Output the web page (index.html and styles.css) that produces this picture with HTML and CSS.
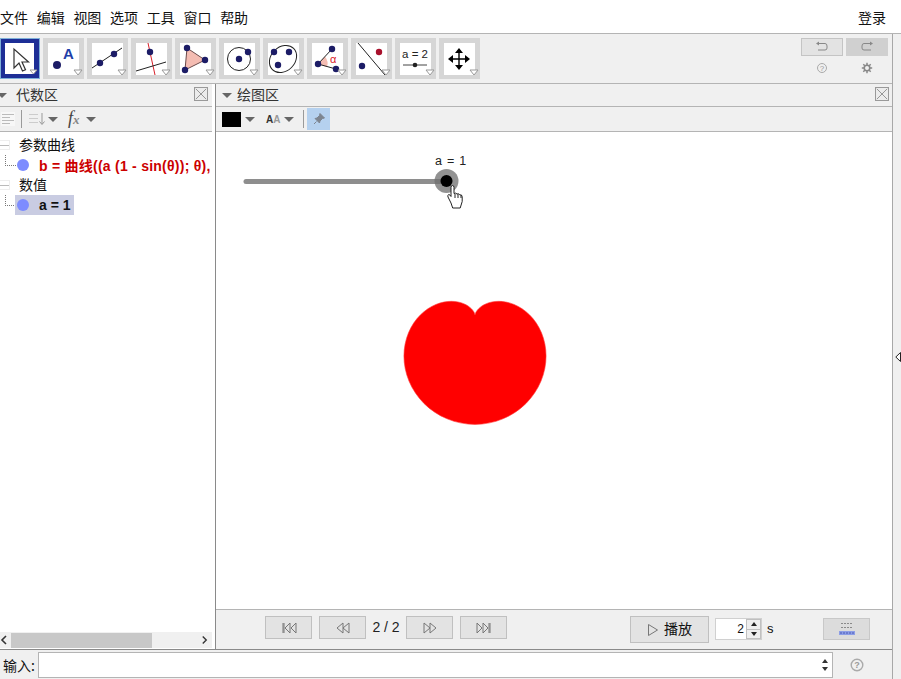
FILE: index.html
```html
<!DOCTYPE html>
<html lang="zh">
<head>
<meta charset="utf-8">
<title>GeoGebra</title>
<link rel="stylesheet" href="styles.css">
</head>
<body>
<div class="app">
  <header class="menubar">
    <nav class="menus"><span>文件</span><span>编辑</span><span>视图</span><span>选项</span><span>工具</span><span>窗口</span><span>帮助</span></nav>
    <span class="login">登录</span>
  </header>
  <div class="below">
    <div class="work">
      <section class="toolbar">
        <div class="tools">
          <div class="tool selected"><svg viewBox="0 0 40 41" width="40" height="41"><rect x="5" y="5" width="29" height="31" fill="#fff"/><path d="M14 11v19l5-5 3.500 8 3-1.300-3.500-7.700h6.500z" fill="#fff" stroke="#333" stroke-width="1.200"/><path d="M30 32h7l-3.500 4z" fill="#fff" stroke="#999"/></svg></div>
          <div class="tool"><svg viewBox="0 0 41 41" width="41" height="41"><rect x="5" y="5" width="31" height="32" fill="#fff"/><circle cx="14" cy="27" r="4" fill="#1c1c66"/><text x="20" y="21" class="pt-label">A</text><path class="drop" d="M31 32h8l-4 5z"/></svg></div>
          <div class="tool"><svg viewBox="0 0 41 41" width="41" height="41"><rect x="5" y="5" width="31" height="32" fill="#fff"/><path d="M5 30L35 10" stroke="#222" fill="none"/><circle cx="13" cy="25" r="3.200" fill="#1c1c66"/><circle cx="27" cy="16" r="3.200" fill="#1c1c66"/><path class="drop" d="M31 32h8l-4 5z"/></svg></div>
          <div class="tool"><svg viewBox="0 0 41 41" width="41" height="41"><rect x="5" y="5" width="31" height="32" fill="#fff"/><path d="M17 5L24 37" stroke="#d8202a" fill="none"/><path d="M5 33L35 24" stroke="#222" fill="none"/><circle cx="19" cy="14" r="3.200" fill="#1c1c66"/><path class="drop" d="M31 32h8l-4 5z"/></svg></div>
          <div class="tool"><svg viewBox="0 0 41 41" width="41" height="41"><rect x="5" y="5" width="31" height="32" fill="#fff"/><path d="M12 10L30 22 10 32z" fill="#f4bcb2" stroke="#6a4a4a"/><circle cx="12" cy="10" r="3.200" fill="#1c1c66"/><circle cx="30" cy="22" r="3.200" fill="#1c1c66"/><circle cx="10" cy="32" r="3.200" fill="#1c1c66"/><path class="drop" d="M31 32h8l-4 5z"/></svg></div>
          <div class="tool"><svg viewBox="0 0 41 41" width="41" height="41"><rect x="5" y="5" width="31" height="32" fill="#fff"/><circle cx="20" cy="21" r="11.500" fill="none" stroke="#222"/><circle cx="20" cy="21" r="3.200" fill="#1c1c66"/><circle cx="29" cy="14" r="3.200" fill="#1c1c66"/><path class="drop" d="M31 32h8l-4 5z"/></svg></div>
          <div class="tool"><svg viewBox="0 0 41 41" width="41" height="41"><rect x="5" y="5" width="31" height="32" fill="#fff"/><ellipse cx="20" cy="21" rx="15" ry="12" transform="rotate(-45 20 21)" fill="none" stroke="#222"/><circle cx="11" cy="14" r="3.200" fill="#1c1c66"/><circle cx="26" cy="14" r="3.200" fill="#1c1c66"/><circle cx="15" cy="27" r="3.200" fill="#1c1c66"/><path class="drop" d="M31 32h8l-4 5z"/></svg></div>
          <div class="tool"><svg viewBox="0 0 41 41" width="41" height="41"><rect x="5" y="5" width="31" height="32" fill="#fff"/><path d="M11 26L18 18.500Q22 24 20 29z" fill="#f4bcb2"/><path d="M25 11L11 26 29 31" fill="none" stroke="#222"/><circle cx="25" cy="11" r="3.200" fill="#1c1c66"/><circle cx="11" cy="26" r="3.200" fill="#1c1c66"/><circle cx="29" cy="31" r="3.200" fill="#1c1c66"/><text x="23" y="25" class="angle">α</text><path class="drop" d="M31 32h8l-4 5z"/></svg></div>
          <div class="tool"><svg viewBox="0 0 41 41" width="41" height="41"><rect x="5" y="5" width="31" height="32" fill="#fff"/><path d="M7 5L34 37" stroke="#222" fill="none"/><circle cx="28" cy="14" r="3.200" fill="#a8102c"/><circle cx="11" cy="28" r="3.200" fill="#1c1c66"/><path class="drop" d="M31 32h8l-4 5z"/></svg></div>
          <div class="tool"><svg viewBox="0 0 41 41" width="41" height="41"><rect x="5" y="5" width="31" height="32" fill="#fff"/><text x="20" y="20" class="tool-a2">a = 2</text><path d="M8 27H32" stroke="#444" fill="none"/><circle cx="20" cy="27" r="2.300" fill="#222"/><path class="drop" d="M31 32h8l-4 5z"/></svg></div>
          <div class="tool"><svg viewBox="0 0 41 41" width="41" height="41"><rect x="5" y="5" width="31" height="32" fill="#fff"/><path d="M20 12V30M11 21H29" stroke="#000" stroke-width="1.400" fill="none"/><path d="M20 10l4 5h-8zM20 32l4-5h-8zM9 21l5-4v8zM31 21l-5-4v8z" fill="#000"/><path class="drop" d="M31 32h8l-4 5z"/></svg></div>
        </div>
        <div class="history">
          <div class="hist-row">
            <div class="hist-btn"><svg viewBox="0 0 16 12" width="16" height="12"><path d="M4 2.500H11Q13 2.500 13 5V7Q13 9 11 9H4" fill="none" stroke="#888"/><path d="M5 0.500L2 2.500 5 4.500z" fill="#888"/></svg></div>
            <div class="hist-btn off"><svg viewBox="0 0 16 12" width="16" height="12"><path d="M12 2.500H5Q3 2.500 3 5V7Q3 9 5 9H12" fill="none" stroke="#888"/><path d="M11 0.500L14 2.500 11 4.500z" fill="#888"/></svg></div>
          </div>
          <div class="hist-row icons">
            <span class="hist-ic"><svg viewBox="0 0 12 12" width="12" height="12"><circle cx="6" cy="6" r="4.500" fill="none" stroke="#aaa"/><text x="6" y="8.500" class="q">?</text></svg></span>
            <span class="hist-ic"><svg viewBox="0 0 12 12" width="12" height="12"><circle cx="6" cy="6" r="2.800" fill="none" stroke="#888" stroke-width="1.600"/><path d="M6 .8V3M6 9V11.200M.8 6H3M9 6H11.200M2.300 2.300L3.800 3.800M8.200 8.200L9.700 9.700M2.300 9.700L3.800 8.200M8.200 3.800L9.700 2.300" stroke="#888" stroke-width="1.500"/></svg></span>
          </div>
        </div>
      </section>
      <main class="panels">
        <section class="algebra">
          <div class="panel-head">
            <span class="tri head-tri"></span>
            <span class="panel-title">代数区</span>
            <span class="close"><svg viewBox="0 0 14 14" width="14" height="14"><path d="M1 1L13 13M13 1L1 13" stroke="#888" fill="none"/></svg></span>
          </div>
          <div class="subbar alg-sub">
            <svg class="ic-lines" viewBox="0 0 14 14" width="14" height="14"><path d="M1 2.500H13M1 5.500H9M1 8.500H13M1 11.500H9" stroke="#bbb" fill="none"/></svg>
            <span class="divider"></span>
            <svg class="ic-sort" viewBox="0 0 18 14" width="18" height="14"><path d="M1 2.500H10M1 6.500H10M1 10.500H10" stroke="#ccc" fill="none"/><path d="M14 1V12M11.500 9.500L14 12.500 16.500 9.500" stroke="#999" fill="none"/></svg>
            <span class="tri"></span>
            <span class="fx">f<i>x</i></span>
            <span class="tri"></span>
          </div>
          <div class="tree">
            <div class="tree-head"><span class="minus"></span><span class="head-text">参数曲线</span></div>
            <div class="tree-row"><span class="dots"></span><span class="marble"></span><span class="expr red">b = 曲线((a (1 - sin(θ)); θ),</span></div>
            <div class="tree-head"><span class="minus"></span><span class="head-text">数值</span></div>
            <div class="tree-row"><span class="dots"></span><span class="sel"><span class="marble"></span><span class="expr">a = 1</span></span></div>
          </div>
          <div class="hscroll">
            <span class="arrow"><svg viewBox="0 0 8 10" width="8" height="10"><path d="M6 1L2 5 6 9" fill="none" stroke="#333" stroke-width="1.600"/></svg></span>
            <span class="thumb-track"><span class="thumb"></span></span>
            <span class="arrow"><svg viewBox="0 0 8 10" width="8" height="10"><path d="M2 1L6 5 2 9" fill="none" stroke="#333" stroke-width="1.600"/></svg></span>
          </div>
        </section>
        <section class="graphics">
          <div class="panel-head">
            <span class="tri head-tri g"></span>
            <span class="panel-title">绘图区</span>
            <span class="close"><svg viewBox="0 0 14 14" width="14" height="14"><path d="M1 1L13 13M13 1L1 13" stroke="#888" fill="none"/></svg></span>
          </div>
          <div class="subbar gfx-sub">
            <span class="swatch"></span>
            <span class="tri"></span>
            <span class="aa">A<b>A</b></span>
            <span class="tri"></span>
            <span class="divider"></span>
            <span class="pin"><svg viewBox="0 0 14 14" width="14" height="14"><path d="M8 1.500L12.500 6 10.500 6.500 8 9 7.500 11 3 6.500 5 6 7.500 3.500zM4.500 9.500L2 12" fill="#7d8590" stroke="#7d8590"/></svg></span>
          </div>
          <div class="canvas">
            <svg class="plot" viewBox="216 132 676 477" width="676" height="477">
              <text x="435" y="165" class="slider-label">a = 1</text>
              <path d="M246 181.500H446" stroke="#8e8e8e" stroke-width="5" stroke-linecap="round" fill="none"/>
              <circle cx="446.500" cy="181" r="12" fill="#6e6e6e" fill-opacity=".75"/>
              <circle cx="446.500" cy="181" r="6" fill="#000"/>
              <path d="M451 203l-3-6q-.8-2 .8-2.500 1.200 0 2.200 2v-9q0-2 1.500-2t1.500 2v6q1.800-1 3 .5 1.800-.8 2.800.8 2.200-.5 2.400 2v4.700l-2 6.500h-7.500z" fill="#fff" stroke="#222"/>
              <path d="M455 194v4M458 194v4M461 195v3" stroke="#222" fill="none"/>
              <path class="heart" transform="translate(475 315)" d="M0 0C0 0 0 -.65 .48 -1.800C.96 -2.950 1.910 -4.600 3.660 -6.350C5.410 -8.100 7.950 -9.930 11.330 -11.330C14.710 -12.730 18.920 -13.680 23.690 -13.680C28.460 -13.680 33.790 -12.710 39.160 -10.490C44.530 -8.270 49.930 -4.770 54.700 0C59.470 4.770 63.610 10.820 66.510 17.820C69.410 24.820 71.060 32.760 71.060 41.030C71.060 49.300 69.410 57.880 66.030 66.030C62.650 74.180 57.560 81.880 51.040 88.400C44.520 94.920 36.580 100.250 27.830 103.870C19.080 107.490 9.550 109.400 0 109.400C-9.550 109.400 -19.080 107.490 -27.830 103.870C-36.580 100.250 -44.520 94.920 -51.040 88.400C-57.560 81.880 -62.650 74.180 -66.030 66.030C-69.410 57.880 -71.060 49.300 -71.060 41.030C-71.060 32.760 -69.410 24.820 -66.510 17.820C-63.610 10.820 -59.470 4.770 -54.700 0C-49.930 -4.770 -44.530 -8.270 -39.160 -10.490C-33.790 -12.710 -28.460 -13.680 -23.690 -13.680C-18.920 -13.680 -14.710 -12.730 -11.330 -11.330C-7.950 -9.930 -5.410 -8.100 -3.660 -6.350C-1.910 -4.600 -.96 -2.950 -.48 -1.800C0 -.65 0 0 0 0Z"/>
            </svg>
          </div>
          <div class="navbar">
            <button class="nav"><svg viewBox="0 0 16 12" width="16" height="12"><path d="M2 1V11M3 1V11M9 1L4 6 9 11zM15 1L10 6 15 11z" fill="none" stroke="#777"/></svg></button>
            <button class="nav"><svg viewBox="0 0 16 12" width="16" height="12"><path d="M8 1L2 6 8 11zM14 1L8 6 14 11z" fill="none" stroke="#777"/></svg></button>
            <span class="count">2 / 2</span>
            <button class="nav"><svg viewBox="0 0 16 12" width="16" height="12"><path d="M2 1L8 6 2 11zM8 1L14 6 8 11z" fill="none" stroke="#777"/></svg></button>
            <button class="nav"><svg viewBox="0 0 16 12" width="16" height="12"><path d="M1 1L6 6 1 11zM7 1L12 6 7 11zM13 1V11M14 1V11" fill="none" stroke="#777"/></svg></button>
            <button class="play"><svg viewBox="0 0 12 14" width="12" height="14"><path d="M1.500 1.500L10.500 7 1.500 12.500z" fill="none" stroke="#777"/></svg><span class="play-text">播放</span></button>
            <div class="spin"><span class="spin-val">2</span><span class="spin-btns"><span class="up"></span><span class="down"></span></span></div>
            <span class="unit">s</span>
            <button class="table-btn"><svg viewBox="0 0 20 16" width="20" height="16"><path d="M4 2.500H16M4 6.500H16" stroke="#8a8a8a" stroke-dasharray="2 1" fill="none"/><rect x="2" y="10" width="16" height="4" fill="#8d9ee6"/><path d="M3 12H17" stroke="#4a5ab8" stroke-dasharray="2 1" fill="none"/></svg></button>
          </div>
        </section>
      </main>
      <footer class="inputbar">
        <label class="input-label">输入:</label>
        <div class="input"><svg viewBox="0 0 8 14" width="8" height="14"><path d="M4 1L7 5H1zM4 13L1 9H7z" fill="#333"/></svg></div>
        <span class="input-help"><svg viewBox="0 0 14 14" width="14" height="14"><circle cx="7" cy="7" r="5.800" fill="none" stroke="#aaa" stroke-width="1.400"/><text x="7" y="10" class="q big">?</text></svg></span>
      </footer>
    </div>
    <aside class="strip"><svg viewBox="0 0 6 10" width="6" height="10"><path d="M5.500 .5L.8 5 5.500 9.500z" fill="#fff" stroke="#222"/></svg></aside>
  </div>
</div>
</body>
</html>
```
FILE: styles.css
```css
* { box-sizing: border-box; }
html, body { margin: 0; padding: 0; background: #fff; }
body { font-family: "Liberation Sans", "Noto Sans CJK SC", sans-serif; color: #111; }
svg { display: block; }
.app { width: 901px; height: 679px; display: flex; flex-direction: column; overflow: hidden; }

.menubar { height: 33px; flex: none; display: flex; justify-content: space-between; align-items: center; padding: 0 15px 0 0; font-size: 14px; font-family: "Noto Sans CJK SC", sans-serif; }
.menus { display: flex; gap: 8.700px; }

.below { flex: 1; min-height: 0; display: flex; border-top: 1px solid #b4b4b4; }
.work { flex: none; display: flex; flex-direction: column; border-right: 1px solid #a8a8a8; width: 893px; }
.strip { flex: 1; background: #f0f0f0; display: flex; align-items: center; justify-content: center; padding: 0 0 0 1px; }
.strip svg { margin: 0 0 -1px 0; }

.toolbar { height: 49px; flex: none; background: #f0f0f0; display: flex; justify-content: space-between; padding: 4px 3px 0 0; }
.tools { display: flex; gap: 3px; }
.tool { width: 41px; height: 41px; background: #d6d6d6; }
.tool.selected { width: 40px; background: #1d2e96; box-shadow: inset 0 0 0 1px #7fb0d8; }
.drop { fill: #fff; stroke: #999; }
.pt-label { font: bold 15px "Liberation Sans", sans-serif; fill: #1f3fa8; }
.angle { font: 11px "Liberation Sans", sans-serif; fill: #d8202a; }
.tool-a2 { font: 11.500px "Liberation Sans", sans-serif; fill: #222; text-anchor: middle; }

.history { display: flex; flex-direction: column; width: 88px; }
.hist-row { display: flex; gap: 3px; }
.hist-btn { width: 42px; height: 18px; background: #e3e3e3; border: 1px solid #c4c4c4; display: flex; align-items: center; justify-content: center; }
.hist-btn.off { background: #d0d0d0; border-color: #d0d0d0; }
.hist-row.icons { margin-top: 6px; }
.hist-ic { width: 42px; display: flex; justify-content: center; }
.q { font: 8px "Liberation Sans", sans-serif; fill: #999; text-anchor: middle; }
.q.big { font: bold 9px "Liberation Sans", sans-serif; }

.panels { flex: 1; min-height: 0; display: flex; border-top: 1px solid #b4b4b4; }
.algebra { width: 216px; flex: none; display: flex; flex-direction: column; border-right: 1px solid #8a8a8a; padding-right: 3px; }
.graphics { flex: 1; min-width: 0; display: flex; flex-direction: column; }

.panel-head { height: 23px; flex: none; background: #f0f0f0; border-bottom: 1px solid #b4b4b4; display: flex; align-items: center; font-family: "Noto Sans CJK SC", sans-serif; font-size: 14px; color: #333; }
.panel-title { flex: 1; padding-bottom: 2px; }
.tri { display: inline-block; width: 0; height: 0; border-left: 5px solid transparent; border-right: 5px solid transparent; border-top: 5px solid #666; flex: none; }
.head-tri { margin: 0 9px 0 -3px; }
.head-tri.g { margin: 0 5px 0 6px; }
.close { width: 14px; height: 14px; border: 1px solid #999; margin: -2px 4px 0 0; background: #ececec; display: flex; align-items: center; justify-content: center; flex: none; }
.graphics .close { margin-right: 3px; }
.close svg { width: 12px; height: 12px; }

.subbar { height: 25px; flex: none; background: #f0f0f0; border-bottom: 1px solid #b4b4b4; display: flex; align-items: center; }
.alg-sub { padding-left: 1px; }
.ic-lines { background: #f7f7f7; }
.divider { width: 1px; height: 18px; background: #9a9a9a; flex: none; }
.alg-sub .divider { margin: 0 6px; }
.ic-sort { margin-right: 2px; }
.fx { font: italic 18px "Liberation Serif", serif; margin-left: 10px; margin-right: 2px; color: #444; width: 16px; line-height: 18px; white-space: nowrap; }
.fx i { font-size: 13px; font-weight: bold; color: #888; }

.tree { flex: 1; min-height: 0; background: #fff; padding-top: 3px; overflow: hidden; font-size: 14px; font-family: "Noto Sans CJK SC", sans-serif; }
.tree-head { height: 20px; display: flex; align-items: center; gap: 9px; }
.head-text { padding-bottom: 2px; }
.minus { width: 10px; height: 10px; border: 1px solid #eee; border-left: 0; flex: none; background: linear-gradient(#fff 4px, #bbb 4px, #bbb 5px, #fff 5px); }
.tree-row { height: 20px; display: flex; align-items: center; white-space: nowrap; }
.dots { width: 11px; height: 11px; margin: -10px 0 0 5px; border-left: 1px dotted #777; border-bottom: 1px dotted #777; flex: none; }
.marble { width: 12px; height: 12px; border-radius: 50%; background: #7d8cff; flex: none; margin-left: 1px; }
.expr { font: bold 14px "Liberation Sans", "Noto Sans CJK SC", sans-serif; margin-left: 10px; }
.expr.red { color: #cc0000; letter-spacing: .25px; }
.sel { display: flex; align-items: center; background: #c9cce2; height: 20px; width: 59px; margin-left: -1px; padding-left: 1px; }

.hscroll { height: 16px; flex: none; margin-bottom: 1px; background: #f0f0f0; display: flex; align-items: center; justify-content: space-between; }
.arrow { width: 11px; display: flex; align-items: center; }
.arrow:last-child { justify-content: flex-end; padding-right: 4px; }
.thumb-track { flex: 1; height: 15px; }
.thumb { display: block; height: 15px; width: 141px; background: #c8c8c8; }

.canvas { flex: 1; min-height: 0; background: #fff; overflow: hidden; }
.slider-label { font: 12.500px "Liberation Sans", sans-serif; fill: #222; word-spacing: 1.500px; }
.heart { fill: #ff0000; stroke: #ff3a3a; stroke-width: .6; }

.gfx-sub { padding-left: 6px; }
.swatch { width: 19px; height: 15px; background: #000; margin-right: 4px; flex: none; }
.aa { font: bold 10px "Liberation Sans", sans-serif; margin: 0 4px 0 11px; color: #333; width: 14px; }
.aa b { color: #999; }
.gfx-sub .divider { margin-left: 9px; margin-right: 3px; }
.pin { width: 23px; height: 22px; background: #b5d1ef; display: flex; align-items: center; justify-content: center; flex: none; }

.navbar { height: 40px; flex: none; background: #f0f0f0; border-top: 1px solid #b4b4b4; display: flex; align-items: flex-start; padding: 6px 0 0 49px; }
button { padding: 0; font: inherit; color: inherit; }
.nav { width: 47px; height: 23px; background: #e3e3e3; border: 1px solid #c0c0c0; display: flex; align-items: center; justify-content: center; }
.nav + .nav { margin-left: 7px; }
.count { width: 40px; height: 23px; font-size: 14px; line-height: 23px; text-align: center; color: #222; }
.play { width: 79px; height: 27px; margin-left: 123px; background: #e3e3e3; border: 1px solid #c0c0c0; display: flex; align-items: center; justify-content: center; gap: 5px; font-family: "Noto Sans CJK SC", sans-serif; font-size: 14px; }
.play-text { padding-bottom: 3px; }
.spin { width: 47px; height: 22px; margin: 2px 0 0 6px; background: #fff; border: 1px solid #d0d0d0; display: flex; justify-content: flex-end; font-size: 12px; line-height: 20px; }
.spin-val { padding-right: 2px; }
.spin-btns { width: 15px; display: flex; flex-direction: column; border: 1px solid #c0c0c0; background: #eee; }
.up, .down { flex: 1; display: flex; align-items: center; justify-content: center; }
.up::before { content: ""; border-left: 3.500px solid transparent; border-right: 3.500px solid transparent; border-bottom: 4px solid #222; }
.down { border-top: 1px solid #c0c0c0; }
.down::before { content: ""; border-left: 3.500px solid transparent; border-right: 3.500px solid transparent; border-top: 4px solid #222; }
.unit { font-size: 13px; line-height: 22px; margin: 2px 0 0 5px; width: 7px; }
.table-btn { width: 47px; height: 22px; margin: 2px 0 0 49px; background: #dcdcdc; border: 1px solid #c8c8c8; display: flex; align-items: center; justify-content: center; }

.inputbar { height: 30px; flex: none; background: #f0f0f0; border-top: 1px solid #8a8a8a; display: flex; align-items: center; }
.input-label { width: 38px; padding-left: 3px; font-family: "Noto Sans CJK SC", sans-serif; font-size: 14px; white-space: nowrap; overflow: hidden; flex: none; }
.input { width: 795px; height: 26px; background: #fff; border: 1px solid #b4b4b4; display: flex; align-items: center; justify-content: flex-end; padding-right: 3px; flex: none; }
.input-help { margin-left: 17px; }
```
